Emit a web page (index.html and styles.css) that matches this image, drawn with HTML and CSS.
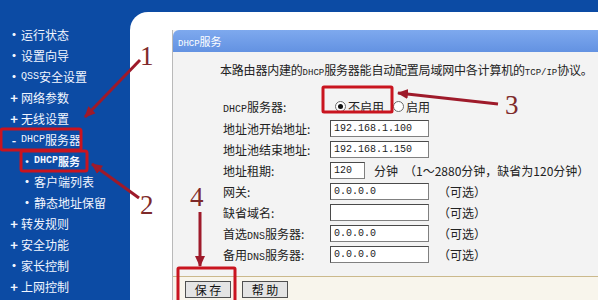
FILE: index.html
```html
<!DOCTYPE html>
<html lang="zh-CN">
<head>
    <meta charset="utf-8">
    <meta name="viewport" content="width=device-width, initial-scale=1.0">
    <title>DHCP服务</title>
    <link rel="stylesheet" href="styles.css">
</head>
<body>
    <div class="page">
        <nav class="menu">
            <ul>
                <li><span class="mk">•</span>运行状态</li>
                <li><span class="mk">•</span>设置向导</li>
                <li><span class="mk">•</span><span class="en">QSS</span>安全设置</li>
                <li><span class="mk plus">+</span>网络参数</li>
                <li><span class="mk plus">+</span>无线设置</li>
                <li class="open"><span class="mk">-</span><span class="en">DHCP</span>服务器</li>
                <li class="sub active"><span class="mk">•</span><span class="en">DHCP</span>服务</li>
                <li class="sub"><span class="mk">•</span>客户端列表</li>
                <li class="sub"><span class="mk">•</span>静态地址保留</li>
                <li><span class="mk plus">+</span>转发规则</li>
                <li><span class="mk plus">+</span>安全功能</li>
                <li><span class="mk">•</span>家长控制</li>
                <li><span class="mk plus">+</span>上网控制</li>
            </ul>
        </nav>

        <main class="main">
            <section class="panel">
                <div class="panel-title"><span class="en">DHCP</span>服务</div>
                <div class="panel-body">
                    <p class="intro">本路由器内建的<span class="en">DHCP</span>服务器能自动配置局域网中各计算机的<span class="en">TCP/IP</span>协议。</p>
                    <div class="form">
                        <div class="row first">
                            <label class="lbl"><span class="en">DHCP</span>服务器:</label>
                            <span class="radio checked"></span><span class="opt">不启用</span>
                            <span class="radio"></span><span class="opt">启用</span>
                        </div>
                        <div class="row">
                            <label class="lbl">地址池开始地址:</label>
                            <input class="field" type="text" value="192.168.1.100">
                        </div>
                        <div class="row">
                            <label class="lbl">地址池结束地址:</label>
                            <input class="field" type="text" value="192.168.1.150">
                        </div>
                        <div class="row">
                            <label class="lbl">地址租期:</label>
                            <input class="field short" type="text" value="120">
                            <span class="hint">分钟</span>
                            <span class="hint wide">（1～2880分钟，缺省为120分钟）</span>
                        </div>
                        <div class="row">
                            <label class="lbl">网关:</label>
                            <input class="field" type="text" value="0.0.0.0">
                            <span class="hint">（可选）</span>
                        </div>
                        <div class="row">
                            <label class="lbl">缺省域名:</label>
                            <input class="field" type="text" value="">
                            <span class="hint">（可选）</span>
                        </div>
                        <div class="row">
                            <label class="lbl">首选<span class="en">DNS</span>服务器:</label>
                            <input class="field" type="text" value="0.0.0.0">
                            <span class="hint">（可选）</span>
                        </div>
                        <div class="row">
                            <label class="lbl">备用<span class="en">DNS</span>服务器:</label>
                            <input class="field" type="text" value="0.0.0.0">
                            <span class="hint">（可选）</span>
                        </div>
                    </div>
                </div>
                <div class="panel-foot">
                    <button type="button" class="btn">保 存</button>
                    <button type="button" class="btn">帮 助</button>
                </div>
            </section>
        </main>
    </div>

    <!-- red hand-drawn annotations over the screenshot -->
    <svg class="marks" width="598" height="300" viewBox="0 0 598 300">
        <defs>
            <marker id="head" markerUnits="userSpaceOnUse" markerWidth="12" markerHeight="12" refX="10" refY="6" orient="auto">
                <path d="M0 1 L11 6 L0 11 Z" fill="#9e1a2a"/>
            </marker>
        </defs>
        <rect x="1" y="129" width="80" height="21" rx="2" class="box"/>
        <rect x="21" y="151" width="66" height="20" rx="2" class="box"/>
        <rect x="323" y="87" width="69" height="25" rx="1" class="box"/>
        <rect x="178" y="268" width="57" height="35" rx="1" class="box"/>
        <line x1="140" y1="60" x2="85" y2="117" class="arrow"/>
        <line x1="139" y1="198" x2="92" y2="164" class="arrow"/>
        <line x1="498" y1="104" x2="398" y2="93" class="arrow"/>
        <line x1="200" y1="212" x2="200" y2="266" class="arrow"/>
        <text x="140" y="65" class="num">1</text>
        <text x="140" y="214" class="num">2</text>
        <text x="505" y="114" class="num">3</text>
        <text x="190" y="206" class="num">4</text>
    </svg>
</body>
</html>
```

FILE: styles.css
```css
* {
    margin: 0;
    padding: 0;
    box-sizing: border-box;
}

body {
    font-family: "Noto Sans CJK SC", sans-serif;
    font-size: 12px;
    background: #0c4ba4;
    width: 598px;
    height: 300px;
    overflow: hidden;
    position: relative;
}

.en {
    font-family: "Liberation Mono", monospace;
    font-size: 10px;
}

.page {
    display: flex;
    height: 300px;
}

/* left menu */
.menu {
    width: 130px;
    flex: none;
    color: #f2f6ff;
    padding-top: 24px;
}

.menu ul {
    list-style: none;
}

.menu li {
    height: 21px;
    display: flex;
    align-items: center;
    padding-left: 7px;
    white-space: nowrap;
}

.menu li.sub {
    padding-left: 20px;
}

.menu li.active {
    font-weight: bold;
    font-size: 11px;
}

.mk {
    display: inline-block;
    width: 14px;
    text-align: center;
    font-weight: bold;
}

.mk.plus {
    font-size: 13px;
}

/* main content */
.main {
    flex: 1;
    margin-top: 12px;
    background: #fff;
    border-top-left-radius: 18px;
    padding: 18px 0 0 42px;
    overflow: hidden;
}

.panel {
    width: 470px;
    background: #f3f3f3;
    border-left: 1px solid #b9b9b9;
}

.panel-title {
    height: 22px;
    line-height: 22px;
    padding-left: 5px;
    color: #fff;
    font-size: 11px;
    background: linear-gradient(#7ea9ee, #6392e2);
    border-top-left-radius: 6px;
}

.panel-title .en {
    font-size: 9px;
}

.panel-body {
    padding: 10px 0 11px 47px;
}

.intro {
    line-height: 16px;
    white-space: nowrap;
    color: #222;
    letter-spacing: -0.2px;
}

.intro .en {
    font-size: 9px;
    letter-spacing: 0;
}

.form {
    margin-top: 14px;
    padding-left: 3px;
    color: #222;
}

.row {
    height: 21px;
    display: flex;
    align-items: center;
    white-space: nowrap;
}

.row.first {
    height: 23px;
}

.lbl {
    width: 107px;
    flex: none;
}

.field {
    width: 99px;
    height: 17px;
    border: 1px solid #808080;
    border-top-color: #4a4a4a;
    border-left-color: #4a4a4a;
    background: #fff;
    font-family: "Liberation Mono", monospace;
    font-size: 10px;
    color: #222;
    padding: 0 3px;
}

.field.short {
    width: 35px;
}

.hint {
    margin-left: 9px;
}

.hint.wide {
    margin-left: 6px;
}

.radio {
    width: 11px;
    height: 11px;
    border: 1px solid #6a6a6a;
    border-radius: 50%;
    background: #fff;
    margin-left: 5px;
    margin-right: 2px;
    display: flex;
    align-items: center;
    justify-content: center;
}

.radio.checked::after {
    content: "";
    width: 5px;
    height: 5px;
    border-radius: 50%;
    background: #111;
}

.opt + .radio {
    margin-left: 9px;
}

.panel-foot {
    height: 26px;
    border-top: 1px solid #cbb98c;
    border-bottom: 1px solid #cbb98c;
    background: #f8f5ec;
    display: flex;
    align-items: center;
    gap: 11px;
    padding-left: 12px;
}

.btn {
    height: 17px;
    width: 46px;
    border: 1px solid #505050;
    background: #e4e4e4;
    font-family: "Noto Sans CJK SC", sans-serif;
    font-size: 12px;
    line-height: 15px;
    color: #111;
}

/* annotations */
.marks {
    position: absolute;
    top: 0;
    left: 0;
    pointer-events: none;
}

.box {
    fill: none;
    stroke: #c9141f;
    stroke-width: 3;
}

.arrow {
    stroke: #9e1a2a;
    stroke-width: 3;
    marker-end: url(#head);
}

.num {
    font-family: "Liberation Serif", serif;
    font-size: 27px;
    fill: #7e2a2a;
}
```
